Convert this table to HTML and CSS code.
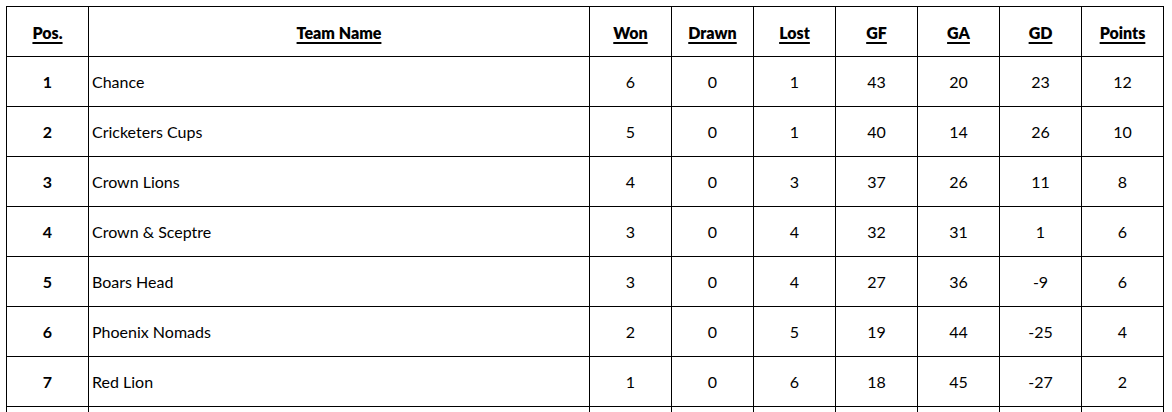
FILE: index.html
```html
<!DOCTYPE html>
<html>
<head>
<meta charset="utf-8">
<link rel="stylesheet" href="styles.css">
</head>
<body>
<table class="league">
<colgroup>
<col class="c-pos"><col class="c-name"><col class="c-num"><col class="c-num"><col class="c-num"><col class="c-num"><col class="c-num"><col class="c-num"><col class="c-num">
</colgroup>
<thead>
<tr><th>Pos.</th><th>Team Name</th><th>Won</th><th>Drawn</th><th>Lost</th><th>GF</th><th>GA</th><th>GD</th><th>Points</th></tr>
</thead>
<tbody>
<tr><td class="pos">1</td><td class="name">Chance</td><td>6</td><td>0</td><td>1</td><td>43</td><td>20</td><td>23</td><td>12</td></tr>
<tr><td class="pos">2</td><td class="name">Cricketers Cups</td><td>5</td><td>0</td><td>1</td><td>40</td><td>14</td><td>26</td><td>10</td></tr>
<tr><td class="pos">3</td><td class="name">Crown Lions</td><td>4</td><td>0</td><td>3</td><td>37</td><td>26</td><td>11</td><td>8</td></tr>
<tr><td class="pos">4</td><td class="name">Crown &amp; Sceptre</td><td>3</td><td>0</td><td>4</td><td>32</td><td>31</td><td>1</td><td>6</td></tr>
<tr><td class="pos">5</td><td class="name">Boars Head</td><td>3</td><td>0</td><td>4</td><td>27</td><td>36</td><td>-9</td><td>6</td></tr>
<tr><td class="pos">6</td><td class="name">Phoenix Nomads</td><td>2</td><td>0</td><td>5</td><td>19</td><td>44</td><td>-25</td><td>4</td></tr>
<tr><td class="pos">7</td><td class="name">Red Lion</td><td>1</td><td>0</td><td>6</td><td>18</td><td>45</td><td>-27</td><td>2</td></tr>
<tr class="tail"><td></td><td></td><td></td><td></td><td></td><td></td><td></td><td></td><td></td></tr>
</tbody>
</table>
</body>
</html>
```
FILE: styles.css
```css
html, body {
  margin: 0;
  padding: 0;
  background: #fff;
}
body {
  padding: 6px 0 0 6px;
  font-family: Lato, "Open Sans", sans-serif;
  font-size: 16px;
  color: #000;
}
.league {
  border-collapse: collapse;
  table-layout: fixed;
  width: 1157px;
}
.c-pos { width: 82px; }
.c-name { width: 501px; }
.c-num { width: 82px; }
.league th, .league td {
  border: 1px solid #000;
  height: 49px;
  padding: 0;
  text-align: center;
  vertical-align: middle;
}
.league th {
  font-weight: 800;
  font-size: 16px;
  height: 47px;
  padding-top: 2px;
  text-decoration: underline;
  text-decoration-thickness: 1.5px;
  text-underline-offset: 3px;
}
.league td.pos { font-weight: bold; }
.league td.name {
  text-align: left;
  padding-left: 3px;
}
```
